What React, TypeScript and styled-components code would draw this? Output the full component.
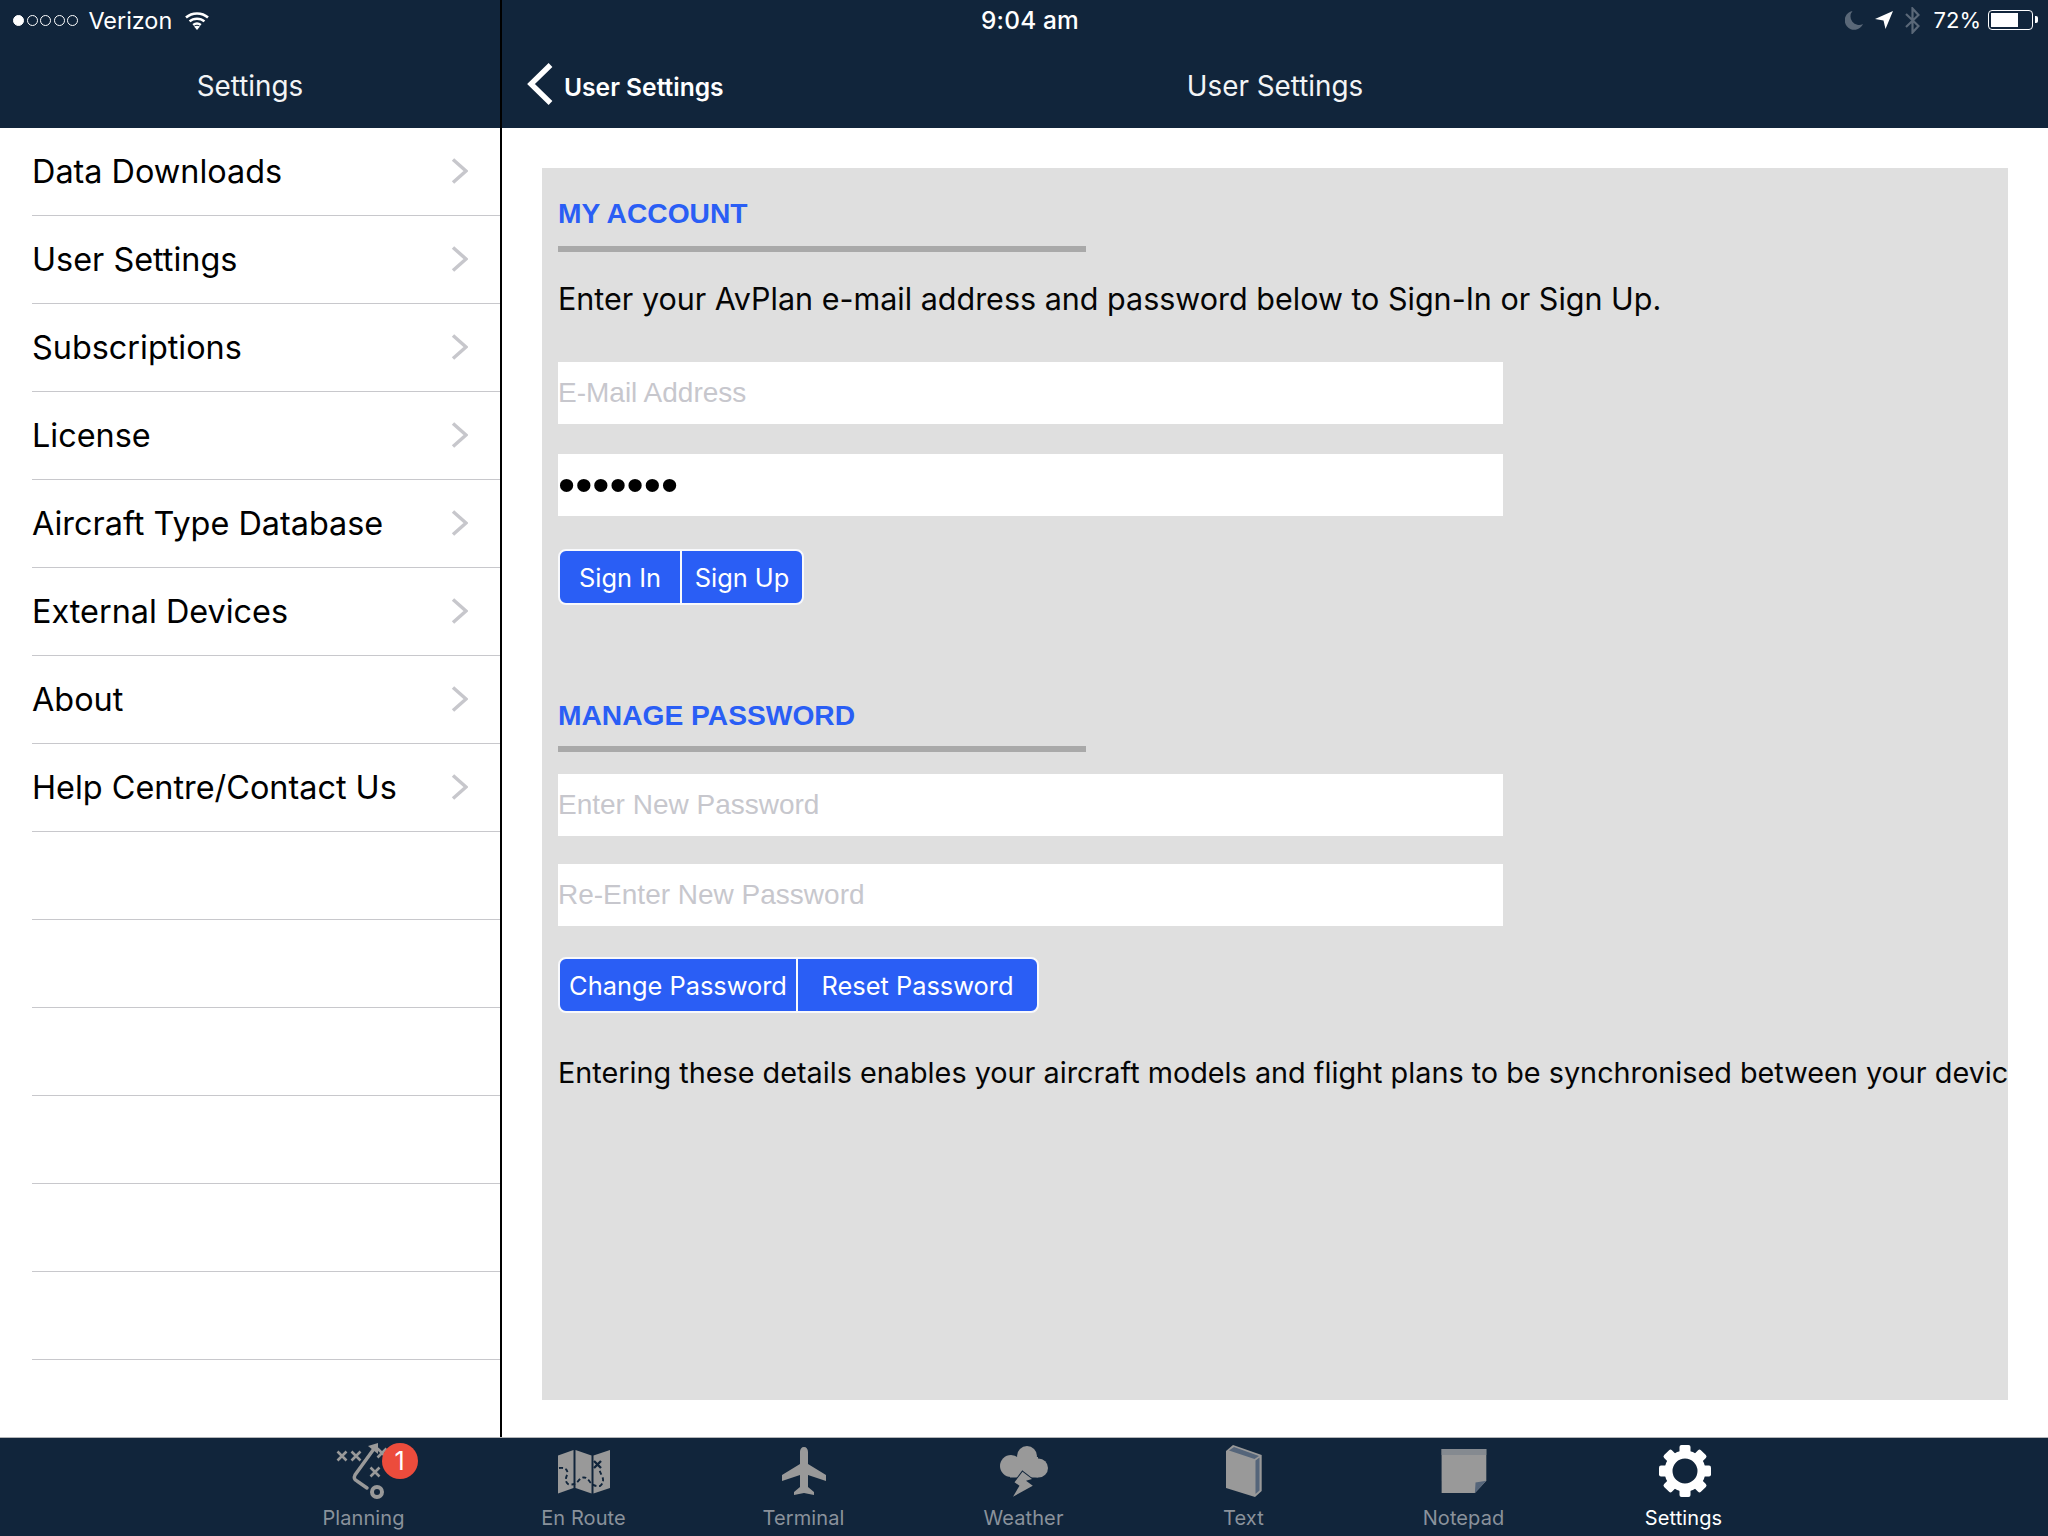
import React from "react";
import styled, { createGlobalStyle } from "styled-components";

const NAVY = "#11253b";
const BLUE = "#2a5ef5";
const SF = `Inter, "Noto Sans", sans-serif`;
const HELV = `"Liberation Sans", Arial, sans-serif`;

const GlobalStyle = createGlobalStyle`
    html, body {
        margin: 0;
        padding: 0;
        background: #fff;
    }
    * {
        box-sizing: border-box;
    }
`;

const Screen = styled.div`
    position: relative;
    display: flex;
    flex-direction: column;
    width: 2048px;
    height: 1536px;
    overflow: hidden;
    font-family: ${SF};
    color: #000;
`;

const Panes = styled.div`
    display: flex;
    flex: 1;
    min-height: 0;
`;

const StatusBar = styled.div`
    position: absolute;
    top: 0;
    left: 0;
    right: 0;
    height: 40px;
    display: grid;
    grid-template-columns: 1fr auto 1fr;
    align-items: center;
    padding: 0 11px 0 13px;
    color: #fff;
    font-size: 23.4px;
`;

const StatusLeft = styled.div`
    display: flex;
    align-items: center;
`;

const Dots = styled.div`
    display: flex;
    gap: 2.6px;
    margin-right: 10px;
`;

const Dot = styled.span<{ $on?: boolean }>`
    width: 11px;
    height: 11px;
    border-radius: 50%;
    border: 1.3px solid #fff;
    background: ${(p) => (p.$on ? "#fff" : "transparent")};
`;

const WifiGap = styled.span`
    width: 13px;
`;

const Clock = styled.div`
    margin-left: 10px;
    font-weight: 500;
    font-size: 24.4px;
    letter-spacing: 0.2px;
`;

const StatusRight = styled.div`
    display: flex;
    align-items: center;
    justify-content: flex-end;
`;

const Percent = styled.span`
    margin: 0 7px 0 14px;
    font-size: 22px;
`;

const Battery = styled.div`
    position: relative;
    width: 45px;
    height: 20px;
    margin-right: 4px;
    padding: 2px;
    border: 1.5px solid #fff;
    border-radius: 4px;
`;

const BatteryLevel = styled.div`
    width: 68%;
    height: 100%;
    background: #fff;
`;

const BatteryTip = styled.span`
    position: absolute;
    right: -6px;
    top: 5px;
    width: 3px;
    height: 7px;
    background: #fff;
    border-radius: 0 2px 2px 0;
`;

const Sidebar = styled.aside`
    display: flex;
    flex-direction: column;
    width: 502px;
    border-right: 2px solid #000;
`;

const Detail = styled.main`
    display: flex;
    flex-direction: column;
    flex: 1;
    min-width: 0;
`;

const NavBar = styled.header`
    display: grid;
    grid-template-columns: 1fr auto 1fr;
    align-items: center;
    flex: none;
    height: 128px;
    padding: 44px 0 0;
    background: ${NAVY};
    color: #fff;
`;

const NavTitle = styled.div`
    grid-column: 2;
    font-size: 27.8px;
    color: #f2f4f6;
`;

const BackButton = styled.div`
    grid-column: 1;
    grid-row: 1;
    display: flex;
    align-items: center;
    gap: 11px;
    padding: 2px 0 0 25px;
    font-size: 24.6px;
    font-weight: 600;

    svg {
        margin-bottom: 6px;
    }
`;

const MenuList = styled.ul`
    flex: 1;
    margin: 0;
    padding: 0;
    list-style: none;
`;

const MenuRow = styled.li`
    display: flex;
    align-items: center;
    justify-content: space-between;
    height: 88px;
    margin-left: 32px;
    padding: 0 32px 1px 0;
    border-bottom: 1px solid #c8c8cc;
    font-size: 32.4px;
`;

const Panel = styled.section`
    flex: 1;
    margin: 40px 40px 37px 40px;
    padding: 20px 0 0 16px;
    background: #dfdfdf;
    overflow: hidden;
`;

const Heading = styled.h2<{ $top?: number }>`
    margin: ${(p) => p.$top ?? 0}px 0 0;
    height: 50px;
    font-family: ${HELV};
    font-size: 28.2px;
    line-height: 50px;
    font-weight: 700;
    color: ${BLUE};
`;

const Rule = styled.div<{ $top: number }>`
    width: 528px;
    height: 6px;
    margin-top: ${(p) => p.$top}px;
    background: #a9a9a9;
`;

const Copy = styled.p<{ $top: number; $size: number }>`
    margin: ${(p) => p.$top}px 0 0;
    height: 40px;
    font-size: ${(p) => p.$size}px;
    line-height: 40px;
    white-space: nowrap;
    color: #050505;
`;

const Field = styled.input<{ $top: number; $dots?: boolean }>`
    display: block;
    width: 945px;
    height: 62px;
    margin: ${(p) => p.$top}px 0 0;
    padding: 0 0 ${(p) => (p.$dots ? 2 : 0)}px;
    border: 0;
    border-radius: 0;
    outline: none;
    background: #fff;
    font-family: ${HELV};
    font-size: ${(p) => (p.$dots ? 49 : 28)}px;
    color: #000;

    &::placeholder {
        color: #c7c7cd;
        opacity: 1;
    }
`;

const ButtonGroup = styled.div<{ $top: number }>`
    display: flex;
    width: fit-content;
    height: 56px;
    margin-top: ${(p) => p.$top}px;
    border: 2px solid #f8f9fc;
    border-radius: 8px;
    background: ${BLUE};
    color: #fff;
    font-size: 25.4px;
    overflow: hidden;
`;

const Segment = styled.div<{ $w: number }>`
    display: flex;
    align-items: center;
    justify-content: center;
    width: ${(p) => p.$w}px;
    white-space: nowrap;

    & + & {
        border-left: 2px solid #f8f9fc;
    }
`;

const TabBar = styled.nav`
    display: flex;
    justify-content: center;
    flex: none;
    height: 99px;
    padding-right: 1px;
    border-top: 1px solid #b4b6b8;
    background: ${NAVY};
`;

const Tab = styled.div`
    display: flex;
    flex-direction: column;
    align-items: center;
    width: 220px;
    padding-top: 3px;
`;

const TabIcon = styled.div`
    position: relative;
    width: 80px;
    height: 60px;
`;

const TabLabel = styled.div<{ $active?: boolean }>`
    margin-top: 4px;
    font-size: 20px;
    line-height: 26px;
    letter-spacing: 0.1px;
    color: ${(p) => (p.$active ? "#fff" : "#8a929b")};
`;

const Badge = styled.span`
    position: absolute;
    left: 58px;
    top: 2px;
    display: flex;
    align-items: center;
    justify-content: center;
    width: 36px;
    height: 36px;
    border-radius: 50%;
    background: #ec4c3c;
    color: #fff;
    font-size: 25px;
`;

const GRAY = "#999999";
const SLATE = "#55657a";

const Glyph: React.FC<{ children: React.ReactNode }> = ({ children }) => (
    <svg width="80" height="60" viewBox="0 0 80 60">
        {children}
    </svg>
);

const Cross: React.FC<{ x: number; y: number }> = ({ x, y }) => (
    <path
        d={`M${x - 4.5} ${y - 4.5}l9 9M${x + 4.5} ${y - 4.5}l-9 9`}
        stroke={GRAY}
        strokeWidth="2.6"
        fill="none"
    />
);

const PlanningIcon = () => (
    <Glyph>
        <Cross x={18} y={15} />
        <Cross x={32} y={15} />
        <Cross x={58} y={12} />
        <Cross x={51} y={31} />
        <path
            d="M52 5 L31 34 Q29 38 33 40 L43 47"
            stroke={GRAY}
            strokeWidth="3.4"
            strokeLinecap="round"
            fill="none"
        />
        <path d="M44 5 L54 2 L54 13 Z" fill={GRAY} />
        <circle cx="53" cy="51" r="5" stroke={GRAY} strokeWidth="4" fill="none" />
    </Glyph>
);

const EnRouteIcon = () => (
    <Glyph>
        <path d="M14 14.5 L29.5 9 V47 L14 52.5 Z" fill={GRAY} />
        <path d="M31.5 9 L47.5 14.5 V52.5 L31.5 47 Z" fill={GRAY} />
        <path d="M49.5 14.5 L66 9 V47 L49.5 52.5 Z" fill={GRAY} />
        <path
            d="M15 27 Q24 26 23.5 33 Q20 40 24 43 Q31 45 35 39 Q41 33 46 41 Q50 46 56 45 Q61 41 58 35 Q56 31 55 28"
            stroke={NAVY}
            strokeWidth="1.9"
            strokeDasharray="4 2.6"
            fill="none"
        />
        <path d="M50 20 l7 7 M57 20 l-7 7" stroke={NAVY} strokeWidth="2.4" />
    </Glyph>
);

const TerminalIcon = () => (
    <Glyph>
        <path
            d="M40 6 C42.5 6 44 8 44 11 L44 23 L62 34 L62 40 L44 34 L44 46 L50 51 L50 54 L40 52 L30 54 L30 51 L36 46 L36 34 L18 40 L18 34 L36 23 L36 11 C36 8 37.5 6 40 6 Z"
            fill={GRAY}
        />
    </Glyph>
);

const WeatherIcon = () => (
    <Glyph>
        <circle cx="43" cy="15" r="10" fill={GRAY} />
        <circle cx="27" cy="25" r="11" fill={GRAY} />
        <circle cx="54.5" cy="27" r="9.5" fill={GRAY} />
        <rect x="26" y="16" width="28" height="20.5" fill={GRAY} />
        <path
            d="M38.5 30.7 L48 38 L42 39.7 L48.8 44.7 L29 55.7 L35.5 44.7 L30.5 41.3 Z"
            fill={GRAY}
            stroke={NAVY}
            strokeWidth="2"
            paintOrder="stroke"
        />
    </Glyph>
);

const TextIcon = () => (
    <Glyph>
        <path d="M22 10 L29 4 L57.7 14 V50 L51 56 L22 47 Z" fill={GRAY} />
        <path d="M25 9.5 L30 6 L55 15 L50.5 18 Z" fill={SLATE} />
        <path d="M51.5 19.5 L55.5 16.5 V49.5 L51.5 53 Z" fill={SLATE} />
    </Glyph>
);

const NotepadIcon = () => (
    <Glyph>
        <path d="M17.6 8 H62.3 V39.7 L50.9 52 H17.6 Z" fill={GRAY} />
        <rect x="17.6" y="8" width="44.7" height="6" fill="#858a90" />
        <path d="M50.9 52 L62.3 39.7 L51.5 41.5 Z" fill={SLATE} />
    </Glyph>
);

const SettingsIcon = () => (
    <Glyph>
        <g transform="translate(41 30)" fill="#fff">
            <circle r="16.5" stroke="#fff" strokeWidth="8" fill="none" />
            {[0, 45, 90, 135, 180, 225, 270, 315].map((a) => (
                <rect
                    key={a}
                    x="-5.5"
                    y="-26"
                    width="11"
                    height="10"
                    rx="2"
                    transform={`rotate(${a})`}
                />
            ))}
        </g>
    </Glyph>
);

const WifiIcon = () => (
    <svg width="24" height="19" viewBox="0 0 24 19" fill="none" stroke="#fff" strokeWidth="2.5">
        <path d="M1 6.5 C7 1 17 1 23 6.5" />
        <path d="M4.6 10.4 C8.6 6.8 15.4 6.8 19.4 10.4" />
        <path d="M8.2 14 C10.4 12.2 13.6 12.2 15.8 14" />
        <path d="M12 19 L9 15.4 C10.8 14.4 13.2 14.4 15 15.4 Z" fill="#fff" stroke="none" />
    </svg>
);

const MoonIcon = () => (
    <svg width="18" height="19" viewBox="0 0 18 19">
        <path d="M7.5 0 A9.5 9.5 0 1 0 18 13 A8.5 8.5 0 0 1 7.5 0 Z" fill="#5a6878" />
    </svg>
);

const LocationIcon = styled(({ className }: { className?: string }) => (
    <svg className={className} width="18" height="18" viewBox="0 0 18 18">
        <path d="M18 0 L10.5 18 L8.5 9.5 L0 8 Z" fill="#fff" />
    </svg>
))`
    margin-left: 12px;
`;

const BluetoothIcon = styled(({ className }: { className?: string }) => (
    <svg
        className={className}
        width="15"
        height="27"
        viewBox="0 0 15 27"
        fill="none"
        stroke="#5a6878"
        strokeWidth="2.2"
    >
        <path d="M1 7 L13.5 19 L7.5 25.5 V1.5 L13.5 8 L1 20" />
    </svg>
))`
    margin-left: 12px;
`;

const ChevronIcon = () => (
    <svg width="17" height="26" viewBox="0 0 17 26" fill="none" stroke="#c7c7cc" strokeWidth="3.5">
        <path d="M2 1.5 L15 13 L2 24.5" />
    </svg>
);

const BackIcon = () => (
    <svg width="26" height="42" viewBox="0 0 26 42" fill="none" stroke="#fff" strokeWidth="5.4">
        <path d="M23.5 2 L4 21 L23.5 40" />
    </svg>
);

const MENU = [
    "Data Downloads",
    "User Settings",
    "Subscriptions",
    "License",
    "Aircraft Type Database",
    "External Devices",
    "About",
    "Help Centre/Contact Us",
    "",
    "",
    "",
    "",
    "",
    "",
];

const TABS = [
    { label: "Planning", icon: <PlanningIcon />, badge: "1" },
    { label: "En Route", icon: <EnRouteIcon /> },
    { label: "Terminal", icon: <TerminalIcon /> },
    { label: "Weather", icon: <WeatherIcon /> },
    { label: "Text", icon: <TextIcon /> },
    { label: "Notepad", icon: <NotepadIcon /> },
    { label: "Settings", icon: <SettingsIcon />, active: true },
];

const App: React.FC = () => {
    return (
        <Screen>
            <GlobalStyle />
            <Panes>
                <Sidebar>
                    <NavBar>
                        <NavTitle>Settings</NavTitle>
                    </NavBar>
                    <MenuList>
                        {MENU.map((item, i) => (
                            <MenuRow key={i}>
                                {item}
                                {item ? <ChevronIcon /> : null}
                            </MenuRow>
                        ))}
                    </MenuList>
                </Sidebar>
                <Detail>
                    <NavBar>
                        <BackButton>
                            <BackIcon />
                            User Settings
                        </BackButton>
                        <NavTitle>User Settings</NavTitle>
                    </NavBar>
                    <Panel>
                        <Heading>MY ACCOUNT</Heading>
                        <Rule $top={8} />
                        <Copy $top={27} $size={30.5}>
                            Enter your AvPlan e-mail address and password below to Sign-In or Sign Up.
                        </Copy>
                        <Field $top={43} placeholder="E-Mail Address" readOnly />
                        <Field $top={30} $dots type="password" defaultValue="1234567" readOnly />
                        <ButtonGroup $top={33}>
                            <Segment $w={120}>Sign In</Segment>
                            <Segment $w={122}>Sign Up</Segment>
                        </ButtonGroup>
                        <Heading $top={85}>MANAGE PASSWORD</Heading>
                        <Rule $top={6} />
                        <Field $top={22} placeholder="Enter New Password" readOnly />
                        <Field $top={28} placeholder="Re-Enter New Password" readOnly />
                        <ButtonGroup $top={31}>
                            <Segment $w={236}>Change Password</Segment>
                            <Segment $w={241}>Reset Password</Segment>
                        </ButtonGroup>
                        <Copy $top={40} $size={28.8}>
                            Entering these details enables your aircraft models and flight plans to be synchronised between your devices.
                        </Copy>
                    </Panel>
                </Detail>
            </Panes>
            <TabBar>
                {TABS.map((tab) => (
                    <Tab key={tab.label}>
                        <TabIcon>
                            {tab.icon}
                            {tab.badge ? <Badge>{tab.badge}</Badge> : null}
                        </TabIcon>
                        <TabLabel $active={tab.active}>{tab.label}</TabLabel>
                    </Tab>
                ))}
            </TabBar>
            <StatusBar>
                <StatusLeft>
                    <Dots>
                        <Dot $on />
                        <Dot />
                        <Dot />
                        <Dot />
                        <Dot />
                    </Dots>
                    Verizon
                    <WifiGap />
                    <WifiIcon />
                </StatusLeft>
                <Clock>9:04 am</Clock>
                <StatusRight>
                    <MoonIcon />
                    <LocationIcon />
                    <BluetoothIcon />
                    <Percent>72%</Percent>
                    <Battery>
                        <BatteryLevel />
                        <BatteryTip />
                    </Battery>
                </StatusRight>
            </StatusBar>
        </Screen>
    );
};

export default App;
